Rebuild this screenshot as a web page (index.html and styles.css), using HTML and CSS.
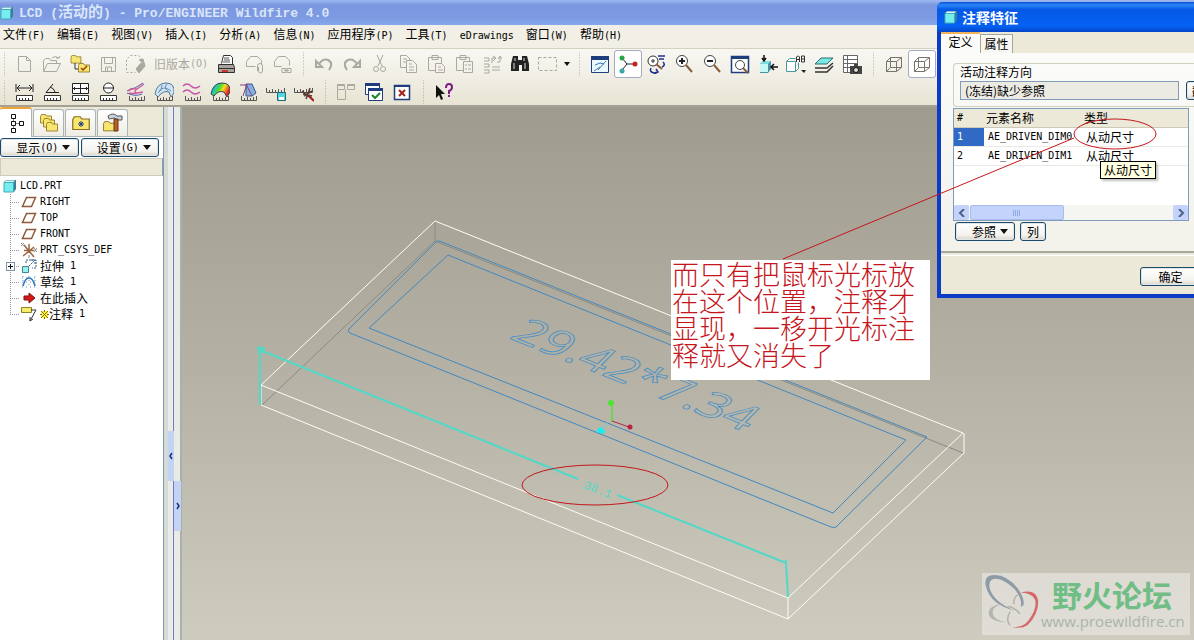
FILE: index.html
```html
<!DOCTYPE html>
<html lang="zh-CN">
<head>
<meta charset="utf-8">
<title>LCD (活动的) - Pro/ENGINEER Wildfire 4.0</title>
<link rel="stylesheet" href="styles.css">
</head>
<body>
<svg class="defs" aria-hidden="true">
  <defs>
    <linearGradient id="rainbow" x1="0" y1="0" x2="1" y2="0.4"><stop offset="0" stop-color="#2020e0"/><stop offset=".3" stop-color="#20c8c0"/><stop offset=".5" stop-color="#50d830"/><stop offset=".7" stop-color="#f0e020"/><stop offset="1" stop-color="#e82020"/></linearGradient>
    <symbol id="ruler" viewBox="0 0 20 20"><path d="M2.500 13.500h16v5h-16zM5.500 16v2M8.500 16v2M11.500 16v2M14.500 16v2" fill="#fff" stroke="#333"/></symbol>
    <symbol id="ticks" viewBox="0 0 20 20"><path d="M3.500 14v4.500h15V14M6.500 16v2M9.500 15v3M12.500 16v2M15.500 15v3" fill="none" stroke="#555"/></symbol>
    <symbol id="part" viewBox="0 0 16 16"><path d="M2 4l2-2h10v9l-2 3H2z" fill="#3a7f98"/><path d="M2 4.500h9.500V14H2z" fill="#74eeee" stroke="#47a8b8"/><path d="M2.500 4L4 2.500h9L11.500 4z" fill="#d8ffff"/></symbol>
    <symbol id="plane" viewBox="0 0 16 16"><path d="M5.500 3.500h9l-4 9h-9z" fill="#fff" stroke="#8d5a3c" stroke-width="1.500"/></symbol>
    <symbol id="folder" viewBox="0 0 12 10"><path d="M.5 2.500l1-2h4l1 1.500h5v7H.5z" fill="#f7e670" stroke="#8a6d1c" stroke-width=".8"/></symbol>
    <symbol id="cube" viewBox="0 0 20 20"><path d="M2.500 7.500h10v10h-10zM6.500 3.500h11v10h-11zM2.500 7.500l4-4M12.500 7.500l5-4M12.500 17.500l5-4M2.500 17.500l4-4" fill="none" stroke="#77746a"/></symbol>
  </defs>
</svg>
<div class="app">
  <header class="titlebar"><svg class="i16"><use href="#part"/></svg><h1><span class="l">LCD (</span>活动的<span class="l">) - Pro/ENGINEER Wildfire 4.0</span></h1></header>
  <nav class="menubar">
    <button>文件<span class="m">(F)</span></button><button>编辑<span class="m">(E)</span></button><button>视图<span class="m">(V)</span></button><button>插入<span class="m">(I)</span></button><button>分析<span class="m">(A)</span></button><button>信息<span class="m">(N)</span></button><button>应用程序<span class="m">(P)</span></button><button>工具<span class="m">(T)</span></button><button><span class="m">eDrawings</span></button><button>窗口<span class="m">(W)</span></button><button>帮助<span class="m">(H)</span></button>
  </nav>
  <div class="toolbars">
    <div class="row">
      <i class="sep first"></i>
      <button class="t off" aria-label="新建"><svg viewBox="0 0 20 20"><path d="M4.500 2.500h8l4 4v11h-12zM12.500 2.500v4h4"/></svg></button>
      <button class="t off" aria-label="打开"><svg viewBox="0 0 20 20"><path d="M1.500 17V6.500l2-2h4l1 2h6v3M1.500 17.500l4-8h13l-4 8zM10 4q3-3 7 0l1-2M17 4h-3"/></svg></button>
      <button class="t" aria-label="工作目录"><svg viewBox="0 0 20 20"><use href="#folder" x="0" y="1" width="12" height="9"/><path d="M5 9v6h3" fill="none" stroke="#333"/><use href="#folder" x="8" y="9" width="12" height="10"/><path d="M11 14l2 2 4-4" fill="none" stroke="#9a3c10" stroke-width="1.500"/></svg></button>
      <button class="t off" aria-label="保存"><svg viewBox="0 0 20 20"><path d="M3.500 3.500h14v14h-14zM6.500 3.500v6h8v-6M7.500 17v-4h6v4M9.500 14v3"/></svg></button>
      <button class="t off" aria-label="拭除"><svg viewBox="0 0 20 20"><path d="M.5 16V5.500l4-4h8l4 5M.5 18.500h9" stroke-dasharray="2 2"/><path d="M10 15l5-6 4 3-6 7zM13 6l4-1 2 7" fill="#aaa89f"/></svg></button>
      <button class="t text off">旧版本<span class="m">(O)</span></button>
      <button class="t" aria-label="打印"><svg viewBox="0 0 20 20"><path d="M5.500 9.500l2-8h7l2 2v7" fill="#fff" stroke="#333"/><path d="M8 4h5M8 6h6M7 8h7" stroke="#555"/><path d="M2.500 10.500h15l1 3v5h-16z" fill="#a8a49c" stroke="#333"/><path d="M3 14.500h15" stroke="#333"/><path d="M6 16h6v2H6z" fill="#c33"/></svg></button>
      <button class="t off" aria-label="发送"><svg viewBox="0 0 20 20"><path d="M2.500 12.500v-5l4-5h7l4 4v4M2.500 12.500h9M13.500 17v-5a2 2 0 0 1 5 0v5a2 2 0 0 1-4 0v-4"/></svg></button>
      <button class="t off" aria-label="链接"><svg viewBox="0 0 20 20"><path d="M2.500 12.500v-5l4-5h7l4 4v5M2.500 12.500h7M10 14.500h4v4h-4zM15 14.500h4v4h-4zM12 16.500h5"/></svg></button>
      <i class="sep"></i>
      <button class="t off" aria-label="撤消"><svg viewBox="0 0 20 20"><path d="M2 7v6h6zM5 10q4-6 9-4 6 3 1 10" stroke-width="2"/></svg></button>
      <button class="t off" aria-label="重做"><svg viewBox="0 0 20 20"><path d="M18 7v6h-6zM15 10q-4-6-9-4-6 3-1 10" stroke-width="2"/></svg></button>
      <button class="t off" aria-label="剪切"><svg viewBox="0 0 20 20"><path d="M7 1l5 11M13 1L8 12"/><circle cx="6" cy="15" r="2.500"/><circle cx="13" cy="15" r="2.500"/></svg></button>
      <button class="t off" aria-label="复制"><svg viewBox="0 0 20 20"><path d="M2.500 1.500h6l3 3v9h-9zM5 5h4M5 8h3"/><path class="pg" d="M8.500 6.500h6l4 4v8h-10zM11 10h3M11 13h5M11 16h5"/></svg></button>
      <button class="t off" aria-label="粘贴"><svg viewBox="0 0 20 20"><path d="M2.500 3.500h13v13h-13zM6 1.500h6v4H6z"/><path class="pg" d="M9.500 9.500h6l3 3v6h-9zM12 13h3M12 16h5"/></svg></button>
      <button class="t off" aria-label="选择性粘贴"><svg viewBox="0 0 20 20"><path d="M2.500 3.500h13v13h-13zM6 1.500h6v4H6z"/><path class="pg" d="M9.500 7.500h9v11h-9zM11 11h2M14 11h3M11 15h2M14 15h3"/></svg></button>
      <button class="t off" aria-label="再生"><svg viewBox="0 0 20 20"><path d="M2 4h5v3H2M2 10h5v3H2M2 16h5v3H2M10 13h8M10 16h8M10 9V4h3M11 2l3 2-3 3M18 3v5h-3M20 5l-2-3-2 3"/></svg></button>
      <button class="t" aria-label="查找"><svg viewBox="0 0 20 20"><path d="M3 2h5v4h4V2h5l2 8v7h-7v-6H9v6H1v-7z" fill="#222"/><path d="M5 4v3M4 9v6M14 4v3M15 9v6" stroke="#ddd"/></svg></button>
      <button class="t off" aria-label="选取"><svg viewBox="0 0 20 20"><path d="M.5 3.500h18v13H.5z" stroke-dasharray="3 2"/></svg></button>
      <button class="drop" aria-label="选取选项"></button>
      <i class="sep"></i>
      <button class="t" aria-label="重画"><svg viewBox="0 0 20 20"><path d="M1.500 2.500h17v16h-17z" fill="#eaf8ff" stroke="#1f3c7c"/><path d="M1 2h18v4H1z" fill="#1f3c7c"/><path d="M5 11l5-2 4 1M8 16l8-9M4 17l6-4" stroke="#3b74b4" fill="none"/></svg></button>
      <button class="t on" aria-label="旋转中心"><svg viewBox="0 0 20 20"><path d="M4 4l5 6h8M9 10l-5 6" fill="none" stroke="#222"/><circle cx="4" cy="4" r="2.500" fill="#25a446"/><circle cx="4" cy="17" r="2.500" fill="#3aa6a8"/><circle cx="17" cy="10" r="2.500" fill="#c42424"/></svg></button>
      <button class="t" aria-label="定向模式"><svg viewBox="0 0 20 20"><circle cx="7" cy="7" r="5" fill="#fff" stroke="#333"/><path d="M5 7h4M7 5v4" stroke="#333"/><path d="M10 10l6 5" stroke="#8b5a3a" stroke-width="2"/><path d="M12 2h7M13 5h5M17 8q3 3-1 5M5 14q-2 4 3 5l4-1M10 15l2 3-4 2" fill="none" stroke="#22308c" stroke-width="1.500"/></svg></button>
      <button class="t" aria-label="放大"><svg viewBox="0 0 20 20"><circle cx="8" cy="7" r="5.500" fill="#fff" stroke="#444"/><path d="M5 7h6M8 4v6" stroke="#222" stroke-width="2"/><path d="M12 11l6 7" stroke="#8b5a3a" stroke-width="2"/></svg></button>
      <button class="t" aria-label="缩小"><svg viewBox="0 0 20 20"><circle cx="8" cy="7" r="5.500" fill="#fff" stroke="#444"/><path d="M5 7h6" stroke="#222" stroke-width="2"/><path d="M12 11l6 7" stroke="#8b5a3a" stroke-width="2"/></svg></button>
      <button class="t" aria-label="重新调整"><svg viewBox="0 0 20 20"><path d="M1.500 2.500h17v16h-17z" fill="#fff" stroke="#1f3c7c" stroke-width="1.500"/><path d="M1 2h18v3H1z" fill="#1f3c7c"/><circle cx="10" cy="11" r="4.500" fill="#fff" stroke="#444"/><path d="M13 14l5 5" stroke="#8b5a3a" stroke-width="2"/></svg></button>
      <button class="t" aria-label="重定向"><svg viewBox="0 0 20 20"><path d="M2 10l3-3h8v8l-3 4H2z" fill="#4b91a4"/><path d="M2 10h8v8H2z" fill="#c4f6f6"/><path d="M2 10l3-3h8l-3 3z" fill="#7fdce0"/><path d="M6 1v5M4 4l2 3 2-3M20 13h-6M16 10l-3 3 3 3" fill="none" stroke="#111" stroke-width="1.500"/></svg></button>
      <button class="t" aria-label="已命名视图"><svg viewBox="0 0 20 20"><path d="M.5 7.500h9v10h-9zM.5 7.500l3-3h6M9.500 17.500l3-3v-6" fill="#fff" stroke="#4c98a2"/><path d="M10.500 8V3l1-1h1l1 1v5M10 5.500h3M15.500 8V2h3v6zM15 5h3" fill="none" stroke="#333"/><path d="M15 16h5l-2 3z" fill="#222"/></svg></button>
      <button class="t" aria-label="层"><svg viewBox="0 0 20 20"><path d="M1 18h12l6-6M1 14h12l6-5" fill="none" stroke="#333" stroke-width="1.500"/><path d="M1 10l6-6h12l-6 6z" fill="#7be8e4" stroke="#2b6b75"/></svg></button>
      <button class="t" aria-label="视图管理器"><svg viewBox="0 0 20 20"><path d="M1.500 1.500h14v17h-14zM1.500 5.500h14M1.500 9.500h14M1.500 13.500h14M5.500 1.500v17" fill="#fff" stroke="#666"/><path d="M8 12h12v8H8zM12 10h4v2h-4z" fill="#444"/><circle cx="14" cy="16" r="2.500" fill="#ddd" stroke="#111"/></svg></button>
      <i class="sep"></i>
      <button class="t" aria-label="线框"><svg><use href="#cube"/></svg></button>
      <button class="t on" aria-label="隐藏线"><svg><use href="#cube"/></svg></button>
    </div>
    <div class="row second">
      <i class="sep first"></i>
      <button class="t" aria-label="距离"><svg viewBox="0 0 20 20"><use href="#ruler"/><path d="M2 2v8M19 2v8M3 6h15M6 3L3 6l3 3M15 3l3 3-3 3" fill="none" stroke="#222"/></svg></button>
      <button class="t" aria-label="角度"><svg viewBox="0 0 20 20"><use href="#ruler"/><path d="M11 2L4 10.500h13M8 5q4 1 5 5" fill="none" stroke="#222"/></svg></button>
      <button class="t" aria-label="面积"><svg viewBox="0 0 20 20"><use href="#ruler"/><path d="M2.500 1.500h16v10h-16zM2 6.500h16M10.500 1v10M5 5L3.500 6.500 5 8M16 5l1.500 1.500L16 8" fill="#fff" stroke="#222"/></svg></button>
      <button class="t" aria-label="直径"><svg viewBox="0 0 20 20"><use href="#ruler"/><circle cx="10.500" cy="6" r="5" fill="#fff" stroke="#222"/><path d="M5 6h11" stroke="#222"/></svg></button>
      <button class="t" aria-label="曲率"><svg viewBox="0 0 20 20"><use href="#ticks"/><path d="M1 9q4-3 8-3l8-5M1 11q8 4 15 1" fill="none" stroke="#4a62ae"/><path d="M18 2l-7 5q-4 3 0 4l6-1M11 7q-5-1-9 2M11 11q-5 1-8 0" fill="none" stroke="#d45a9c" stroke-width="1.500"/></svg></button>
      <button class="t" aria-label="截面"><svg viewBox="0 0 20 20"><path d="M1 12Q3 1 12 1t8 10l-3 4-2-5q-6-2-11 5z" fill="#cfe4f2" stroke="#5874a0"/><path d="M5 9q5-6 12 0M8 3q0 6-4 8M13 2q-4 4 2 8" fill="none" stroke="#6b90b8"/><use href="#ticks"/></svg></button>
      <button class="t" aria-label="偏移"><svg viewBox="0 0 20 20"><use href="#ticks"/><path d="M1 4q4-4 8 0t9 0M1 10q4-4 8 0t9 0" fill="none" stroke="#c653ae" stroke-width="1.500"/></svg></button>
      <button class="t" aria-label="着色曲率"><svg viewBox="0 0 20 20"><path d="M1 12Q3 1 12 1t8 9l-3 5-3-5Q8 8 4 14z" fill="url(#rainbow)" stroke="#345"/><use href="#ticks"/></svg></button>
      <button class="t" aria-label="拔模"><svg viewBox="0 0 20 20"><use href="#ticks"/><path d="M8 2h6l4 9-4 3H8z" fill="#86aede" stroke="#3a5690"/><path d="M2 3h6M9 2L5 14M8 2l6 12" stroke="#8a3c80" fill="none"/></svg></button>
      <button class="t" aria-label="保存分析"><svg viewBox="0 0 20 20"><path d="M.5 6v4.500h18V6M3.500 8v2M6.500 7v3M9.500 8v2M12.500 7v3M15.500 8v2" fill="none" stroke="#555"/><path d="M11.500 10.500h8v8h-8z" fill="#52d4e4" stroke="#25687a"/><path d="M13 15h5v3h-5z" fill="#fff"/></svg></button>
      <button class="t" aria-label="隐藏分析"><svg viewBox="0 0 20 20"><path d="M.5 6v4.500h18V6M3.500 8v2M6.500 7v3M9.500 8v2M12.500 7v3M15.500 8v2" fill="none" stroke="#555"/><path d="M8 9l11 9M10 14l8-5M12 17l4-11M9 12l9 2" stroke="#5b3a34" stroke-width="1.500"/><path d="M15 14l5 5" stroke="#a02020" stroke-width="2"/></svg></button>
      <i class="sep"></i>
      <button class="t off" aria-label="窗口"><svg viewBox="0 0 20 20"><path d="M1.500 2.500h7v5h-7zM11.500 2.500h7v5h-7zM1.500 7.500v10h8v-10M11 3.500h8M1 3.500h8"/></svg></button>
      <button class="t" aria-label="激活窗口"><svg viewBox="0 0 20 20"><path d="M1.500 1.500h14v11h-14z" fill="#fff" stroke="#1f3c7c"/><path d="M1 1h15v3H1z" fill="#1f3c7c"/><path d="M4.500 6.500h14v12h-14z" fill="#fff" stroke="#1f3c7c"/><path d="M4 6h15v3H4z" fill="#1f3c7c"/><path d="M8 13l3 3 5-5" fill="none" stroke="#228432" stroke-width="2"/></svg></button>
      <button class="t" aria-label="关闭窗口"><svg viewBox="0 0 20 20"><path d="M2.500 3.500h15v14h-15z" fill="#fff" stroke="#1f3c7c" stroke-width="1.500"/><path d="M2 3h16v2H2z" fill="#1f3c7c"/><path d="M7 8l6 6M13 8l-6 6" stroke="#a52020" stroke-width="2"/></svg></button>
      <i class="sep"></i>
      <button class="t" aria-label="帮助"><svg viewBox="0 0 20 20"><path d="M2 3v13l3-3 2 5 2-1-2-5h4z" fill="#111"/><path d="M12 6q0-4 3-4t3 3-3 4v3M15 13v2" fill="none" stroke="#7a1b86" stroke-width="2"/></svg></button>
    </div>
  </div>
  <main class="work">
    <aside class="side">
      <div class="tabs">
        <button class="tab sel" aria-label="模型树"><svg viewBox="0 0 20 20"><path d="M5.500 1.500h4v4h-4zM5.500 8.500h4v4h-4zM5.500 15.500h4v4h-4zM13.500 8.500h4v4h-4z" fill="#fff" stroke="#111"/><path d="M7.500 6v2M7.500 13v2M10 10.500h3" stroke="#888"/></svg></button>
        <button class="tab" aria-label="文件夹"><svg viewBox="0 0 20 20"><use href="#folder" x="1" y="1" width="12" height="10"/><use href="#folder" x="4" y="5" width="12" height="10"/><use href="#folder" x="7" y="9" width="12" height="10"/></svg></button>
        <button class="tab" aria-label="收藏夹"><svg viewBox="0 0 20 20"><use href="#folder" x="1" y="3" width="18" height="15"/><path d="M10 8v6M7 11h6M8 9l4 4M12 9l-4 4" stroke="#223a80"/></svg></button>
        <button class="tab" aria-label="连接"><svg viewBox="0 0 20 20"><use href="#folder" x="0" y="8" width="13" height="11"/><path d="M5 3q5-4 9 0h5v4h-5l-2-2-6 1z" fill="#c9d3de" stroke="#555"/><path d="M11 6h4v12h-4z" fill="#b4622a" stroke="#6b3512"/></svg></button>
      </div>
      <div class="acts"><button class="xp">显示<span class="m">(O)</span><i class="dn"></i></button><button class="xp">设置<span class="m">(G)</span><i class="dn"></i></button></div>
      <div class="band"></div>
      <div class="tree">
        <div class="node root"><svg class="i16"><use href="#part"/></svg><span class="m">LCD.PRT</span></div>
        <ul>
          <li><svg class="i16"><use href="#plane"/></svg><span class="m">RIGHT</span></li>
          <li><svg class="i16"><use href="#plane"/></svg><span class="m">TOP</span></li>
          <li><svg class="i16"><use href="#plane"/></svg><span class="m">FRONT</span></li>
          <li><svg class="i16" viewBox="0 0 16 16"><path d="M3 3l10 12M8 2v9M2 14L13 5M3 8.500h10" stroke="#9a6540" stroke-width="1.500"/><path d="M0 1l3 3M3 1L0 4M13 6l3 4M16 6l-3 4M8 13v3" stroke="#888"/></svg><span class="m">PRT_CSYS_DEF</span></li>
          <li><button class="plus" aria-label="展开"></button><svg class="i16" viewBox="0 0 16 16"><path d="M1.500 8.500h6v6h-6z" fill="#9cf0f0" stroke="#3b8794"/><path d="M5 5V2h10v8h-4M8 8l6-6M10 2h4v4" fill="none" stroke="#365f8e" stroke-dasharray="2 1"/></svg>拉伸<span class="m">&nbsp;1</span></li>
          <li><svg class="i16" viewBox="0 0 16 16"><path d="M2 12q2-8 6-8t6 8" fill="none" stroke="#2574b4" stroke-width="1.500"/><path d="M1 4h14M1 8h14M1 13h14M2 2v12M8 2v12M14 2v12" stroke="#6b93c0" stroke-dasharray="1 3"/></svg>草绘<span class="m">&nbsp;1</span></li>
          <li><svg class="i16" viewBox="0 0 16 16"><path d="M3 6h5V3l6 5-6 5v-3H3z" fill="#d81616" stroke="#801010"/></svg>在此插入</li>
          <li><svg class="i16" viewBox="0 0 16 16"><path d="M.5 1.500h10v5H.5z" fill="#f6ec68" stroke="#8b8430"/><path d="M10 4h5L9 15M9 11v4l3-2" fill="none" stroke="#333"/></svg><svg class="star" viewBox="0 0 9 9"><path d="M1 1h7v7H1z" fill="#fff23a"/><path d="M1 1l7 7M8 1L1 8M4.500 0v2M4.500 7v2M0 4.500h2M7 4.500h2" stroke="#77701c"/></svg>注释<span class="m">&nbsp;1</span></li>
        </ul>
      </div>
    </aside>
    <div class="split a"><button aria-label="收起"><svg viewBox="0 0 6 10"><path d="M4 2L2 5l2 3" fill="none" stroke="#1b2f78" stroke-width="1.500"/></svg></button></div>
    <div class="split b"><button aria-label="展开面板"><svg viewBox="0 0 6 10"><path d="M2 2l2 3-2 3" fill="none" stroke="#1b2f78" stroke-width="1.500"/></svg></button></div>
    <section class="canvas">
      <svg class="model" viewBox="182 107 1012 533" preserveAspectRatio="xMinYMin meet" fill="none">
        <path d="M435 221v20L261 406M435 241l528 212" stroke="#8b897f"/>
        <path d="M435 221L261 385l527 213 175-165zM261 385v20l527 214v-21M788 619l176-166v-20" stroke="#fffdf2"/>
        <g stroke="#4287c0"><path d="M437 241q3 0 5 1l485 195-91 90q-2 1-5 0L350 333q-3-1-1-4zM448 255l458 185-73 73-464-185z"/></g>
        <text class="engraved" transform="matrix(.93 .37 -.58 .59 508 338)">29.42*7.34</text>
        <path d="M260 350l318 129M617 495l169 68v-3M260 405v-54M786 563l2 34" stroke="#52d8c6" stroke-width="2"/>
        <path d="M257 346l9 2-7 8z" fill="#52d8c6"/>
        <text class="dim" transform="translate(583 488) rotate(21)">38.1</text>
        <path d="M612 422v-18" stroke="#5bdc42" stroke-width="1.500"/><circle cx="611" cy="403" r="3" fill="#4de436"/>
        <path d="M612 421l17 6" stroke="#b52444"/><circle cx="630" cy="427" r="2.500" fill="#b52444"/>
        <path d="M600 430l8-7" stroke="#4fd8e8"/><path d="M596 432l3-5 6 3-1 4z" fill="#18eef0"/>
      </svg>
      <div class="mark">
        <svg viewBox="0 0 60 60" fill="none">
          <path d="M33 37Q8 31 3 12 0 0 12 0 25 0 36 14q7 10 6 17l-3 2Q41 24 32 14 20 3 12 4 5 5 7 14q4 14 26 23z" fill="#8c9ba6"/>
          <path d="M28 29Q10 30 10 39q0 7 14 10-18-1-18-10 0-9 22-10z" fill="#b4b5b0"/>
          <path d="M39 18q16-4 18 8 1 14-11 26-6 4-16 2 12 0 17-7 9-12 7-21-2-7-15-8z" fill="#d4686a"/>
          <path d="M37 20q-6 3-5 10M25 33q6-1 13 7M28 52q-5-5 0-14" stroke="#b4b0aa" stroke-width="1.500"/>
        </svg>
        <div><strong>野火论坛</strong><span>www.proewildfire.cn</span></div>
      </div>
    </section>
  </main>
  <p class="note">而只有把鼠标光标放<br>在这个位置，注释才<br>显现，一移开光标注<br>释就又消失了</p>
  <section class="dialog" role="dialog" aria-labelledby="dt">
    <header><svg class="i16"><use href="#part"/></svg><h2 id="dt">注释特征</h2></header>
    <div class="dtabs"><button class="sel">定义</button><button>属性</button></div>
    <div class="pane">
      <div class="group">
        <label for="dir">活动注释方向</label>
        <div class="line"><input id="dir" value="(冻结)缺少参照" readonly><button class="xp">翻转</button></div>
      </div>
      <div class="grid">
        <table>
          <thead><tr><th class="m n">#</th><th>元素名称</th><th>类型</th></tr></thead>
          <tbody><tr><td class="m n cur">1</td><td class="m">AE_DRIVEN_DIM0</td><td>从动尺寸</td></tr>
          <tr><td class="m n">2</td><td class="m">AE_DRIVEN_DIM1</td><td>从动尺寸</td></tr></tbody>
        </table>
        <div class="scroll">
          <button aria-label="向左"><svg viewBox="0 0 8 8"><path d="M6 0L2 4l4 4" fill="none" stroke="#4d6185" stroke-width="2"/></svg></button>
          <span class="thumb"><svg viewBox="0 0 8 6"><path d="M.5 0v6M2.500 0v6M4.500 0v6M6.500 0v6" stroke="#8fa9e4"/></svg></span>
          <button aria-label="向右"><svg viewBox="0 0 8 8"><path d="M2 0l4 4-4 4" fill="none" stroke="#4d6185" stroke-width="2"/></svg></button>
        </div>
      </div>
      <div class="btns"><button class="xp ref">参照<i class="dn"></i></button><button class="xp">列</button></div>
    </div>
    <footer><button class="xp ok">确定</button></footer>
    <div class="tip" role="tooltip">从动尺寸</div>
  </section>
  <svg class="marks" fill="none" stroke="#c4161c"><ellipse cx="1115" cy="134" rx="41" ry="15"/><path d="M1074 138L783 259"/><ellipse cx="595" cy="485" rx="73" ry="20"/></svg>
</div>
</body>
</html>
```
FILE: styles.css
```css
* { box-sizing: border-box; }
html, body { height: 100%; }
body { margin: 0; overflow: hidden; font: 12px/16px "Noto Sans CJK SC", sans-serif; color: #000; }
button { font: inherit; color: inherit; margin: 0; padding: 0; border: 0; background: none; white-space: nowrap; }
svg { display: block; flex: none; }
.defs { position: absolute; width: 0; height: 0; }
.m { font-family: "DejaVu Sans Mono", monospace; font-size: 10px; }
.i16 { width: 16px; height: 16px; }
.app { position: relative; height: 100%; display: flex; flex-direction: column; overflow: hidden; background: #ece9d8; }

.titlebar { flex: none; height: 25px; display: flex; align-items: center; gap: 4px; background: linear-gradient(#9db9f0, #7b97df 20%, #7d9ae2 70%, #84a8ec); }
.titlebar .i16 { margin-left: -1px; }
.titlebar h1 { margin: 0; font-size: 15px; line-height: 24px; font-weight: 700; color: #d9e5f8; white-space: nowrap; }
.l { font-family: "Liberation Mono", monospace; font-size: 13px; }
.menubar { flex: none; height: 24px; display: flex; align-items: center; gap: 12px; padding: 0 3px 4px; background: #f1efe6; border-bottom: 1px solid #d5d1c0; }
.menubar button { line-height: 16px; }

.toolbars { flex: none; padding: 1px 3px 0; background: linear-gradient(#f8f7f2, #f1efe6 45%, #e7e4d3); border-bottom: 2px solid #a5a294; }
.row { display: flex; height: 28px; align-items: center; }
.row.second { height: 27px; }
.sep { flex: none; width: 14px; height: 24px; background: radial-gradient(circle, #a9a697 1px, transparent 1px) center / 3px 3px repeat-y; }
.sep.first { width: 7px; background-position: left; }
.t { flex: none; width: 28px; height: 28px; display: grid; place-items: center; }
.t svg { width: 20px; height: 20px; }
.second .t { height: 27px; }
.t.off { color: #aaa89f; }
.t.off svg { fill: none; stroke: #aaa89f; }
.pg { fill: #f4f2ea; }
.t.text { width: 62px; display: flex; align-items: center; justify-content: center; }
.t.on { background: #fff; border: 1px solid #a3abc0; border-radius: 3px; }
.drop { border: solid transparent; border-width: 4px 3px 0; border-top-color: #111; width: 6px; margin: 0 2px; }

.work { flex: 1; min-height: 0; display: flex; }
.side { flex: none; width: 164px; display: flex; flex-direction: column; background: #fff; border-right: 1px solid #7f9aa8; }
.tabs { display: flex; align-items: flex-end; height: 30px; gap: 1px; background: #ece9d8; border-bottom: 1px solid #a9b5b7; }
.tab { width: 31px; height: 27px; display: grid; place-items: center; border: 1px solid #a9b5b7; border-bottom: 0; border-radius: 3px 3px 0 0; background: linear-gradient(#fff, #efede3); }
.tab svg { width: 20px; height: 20px; }
.tab.sel { width: 32px; height: 30px; margin-bottom: -1px; background: #fff; border-left: 0; border-top: 2px solid #f0a433; }
.acts { display: flex; gap: 2px; padding: 1px 4px 1px 0; }
.xp { border: 1px solid #1c4a6a; border-radius: 3px; background: linear-gradient(#fff, #f4f3ee 70%, #d9d5c8); box-shadow: inset 0 0 0 1px #dfe5e8; display: flex; align-items: center; justify-content: center; height: 19px; }
.acts .xp { flex: 1; padding-left: 8px; }
.dn { border: solid transparent; border-width: 5px 4px 0; border-top-color: #111; margin-left: 4px; }
.band { height: 18px; background: #ece9d8; border: 1px solid #cfccbc; border-right-color: #8a9db0; }
.tree { padding: 2px; }
.node, .tree li { display: flex; align-items: center; height: 16px; white-space: nowrap; }
.node { gap: 2px; }
.tree ul { list-style: none; margin: 0 0 0 8px; padding: 0; }
.tree li { position: relative; padding-left: 11px; background: repeating-linear-gradient(#999 0 1px, transparent 1px 2px) left / 1px 100% no-repeat, repeating-linear-gradient(90deg, #999 0 1px, transparent 1px 2px) left center / 10px 1px no-repeat; }
.tree li:last-child { background-size: 1px 50%, 10px 1px; background-position: left top, left center; }
.tree li .i16 { margin-right: 3px; }
.plus { position: absolute; left: -4px; top: 4px; width: 9px; height: 9px; border: 1px solid #7f93a8; background: linear-gradient(#111, #111) center / 5px 1px no-repeat, linear-gradient(#111, #111) center / 1px 5px no-repeat, #fff; }
.star { width: 9px; height: 9px; }

.split { flex: none; display: flex; flex-direction: column; background: #e9ebe6; }
.split.a { width: 10px; border-left: 4px solid #d5dcd8; border-right: 1px solid #747bc4; padding-top: 324px; }
.split.b { width: 8px; border-right: 2px solid #a7b2b0; padding-top: 374px; }
.split button { height: 50px; margin-right: -1px; display: grid; place-items: center; background: #c3d3f4; }
.split svg { width: 6px; height: 10px; }

.canvas { flex: 1; min-width: 0; position: relative; background: linear-gradient(#9f9c8f, #b5b2a5 50%, #cecbbf); }
.model { width: 100%; height: auto; }
.engraved { font: 400 50px "Open Sans", sans-serif; fill: none; stroke: #4690c8; stroke-width: 1; }
.dim { font: 12px "Liberation Mono", monospace; fill: #52d8c6; }
.mark { position: absolute; right: 4px; bottom: 5px; width: 208px; height: 62px; display: flex; align-items: center; background: rgba(235, 234, 228, .6); }
.mark svg { width: 58px; height: 58px; margin-left: 1px; }
.mark div { display: flex; flex-direction: column; }
.mark strong { font-size: 30px; line-height: 34px; margin-left: 11px; color: #70bd86; font-weight: 700; }
.mark span { font: 15px/20px "Open Sans", sans-serif; color: #a8b5aa; }

.note { position: absolute; left: 671px; top: 260px; margin: 0; padding: 0 6px 12px 1px; width: 259px; background: #fff; color: #c4161c; font-size: 27px; line-height: 27px; font-weight: 300; white-space: nowrap; }

.dialog { position: absolute; left: 937px; top: 2px; width: 300px; border: solid #0a3cc8; border-width: 0 4px 4px; border-radius: 6px 0 0 0; background: #ece9d8; }
.dialog > header { height: 30px; margin: 0 -4px; padding-left: 6px; display: flex; align-items: center; gap: 3px; border-radius: 6px 0 0 0; background: linear-gradient(#0a4fd0, #2a86fa 10%, #0558e4 25%, #0562f4 80%, #0346c8); }
.dialog h2 { margin: 0; color: #fff; font-size: 14px; line-height: 20px; font-weight: 700; }
.dtabs { display: flex; align-items: flex-end; height: 21px; }
.dtabs button { width: 33px; height: 19px; border: 1px solid #a2a79d; border-bottom: 0; background: #f8f7f2; }
.dtabs .sel { width: 39px; height: 21px; padding-bottom: 3px; background: #fbfbf9; border: 0; border-top: 2px solid #f0b35c; }
.pane { padding: 10px 12px; background: linear-gradient(#fbfbf9, #f2f1ea); border-bottom: 2px solid #aaa89c; }
.group { border: 1px solid #d0d0bf; border-right: 0; border-radius: 4px; padding: 0 0 6px 6px; height: 44px; }
.group label { display: block; line-height: 16px; }
.line { display: flex; gap: 7px; margin-top: 1px; }
.line input { flex: none; width: 219px; height: 19px; padding: 0 4px; border: 1px solid #7f9db9; background: #ebebe4; font: inherit; color: #000; }
.line .xp { flex: none; width: 36px; }
.grid { margin-top: 1px; width: 236px; height: 113px; display: flex; flex-direction: column; justify-content: space-between; border: 1px solid #7f9db9; background: #fff; }
table { border-collapse: collapse; width: 100%; table-layout: fixed; }
th, td { height: 19px; padding: 0 4px; line-height: 16px; font-weight: 400; text-align: left; white-space: nowrap; border-bottom: 1px solid #eceae2; }
th { height: 18px; background: #ece9d8; padding-left: 2px; border-bottom-color: #cdc9b8; }
.n { width: 30px; padding-left: 3px; }
th:nth-child(2) { width: 98px; }
.cur { background: #316ac5; color: #fff; }
.scroll { display: flex; justify-content: flex-start; gap: 1px; height: 15px; background: #f5f5f1; }
.scroll button, .thumb { width: 15px; display: grid; place-items: center; border-radius: 2px; background: #c3d3fb; }
.scroll button:last-child { margin-left: auto; }
.scroll button svg { width: 8px; height: 8px; }
.thumb { width: 94px; border: 1px solid #aabdea; }
.thumb svg { width: 8px; height: 6px; }
.btns { display: flex; gap: 5px; padding: 1px 2px 0; }
.btns .xp { width: 26px; }
.btns .ref { width: 60px; padding-left: 10px; }
.dialog footer { display: flex; justify-content: flex-end; padding: 11px 32px 8px; margin-top: 2px; border-top: 1px solid #fff; }
.ok { width: 61px; }
.tip { position: absolute; left: 159px; top: 159px; padding: 0 3px; border: 1px solid #000; background: #ffffe1; box-shadow: 2px 2px 2px #8888; line-height: 16px; }
.marks { position: absolute; inset: 0; width: 100%; height: 100%; pointer-events: none; }
```
